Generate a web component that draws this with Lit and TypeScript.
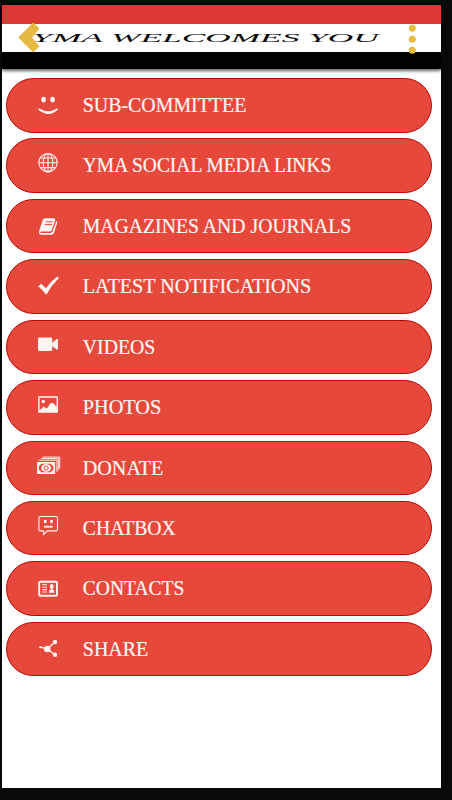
import { LitElement, html, css, svg } from "lit";
import { customElement } from "lit/decorators.js";

const items = [
  { label: "SUB-COMMITTEE", width: 163.5, icon: svg`<ellipse cx="43.6" cy="21.6" rx="2.3" ry="2.9"/><ellipse cx="52.6" cy="21.6" rx="2.3" ry="2.9"/><path d="M38.2 31.6Q37.8 30.2 39.4 30.6Q48 36 56.8 30.6Q58.4 30.2 57.8 31.8Q48.5 40.4 38.2 31.6Z"/>` },
  { label: "YMA SOCIAL MEDIA LINKS", width: 248.5, icon: svg`<g class="line"><circle cx="48" cy="24.7" r="9.2"/><ellipse cx="48" cy="24.7" rx="4.9" ry="9.2"/><path d="M48 15.5V34M38.8 24.7H57.2M40.4 20H55.6M40.4 29.6H55.6"/></g>` },
  { label: "MAGAZINES AND JOURNALS", width: 268.5, icon: svg`<path d="M45.3 19.3H54Q55.6 19.5 55.2 21L51.8 31.2Q51.3 32.6 49.8 32.6H41.5Q39.6 32.8 40.4 34H50.5Q52 33.9 52.6 32.6L56.2 22.3Q57.7 22.5 57.1 24.2L53.9 34Q53.2 35.8 51.3 35.8H41.2Q38.2 35.5 39.2 31.7L42.6 21.2Q43.2 19.4 45.3 19.3Z"/><path class="cut" d="M45.7 22.8H52.7M44.8 25.6H51.8"/>` },
  { label: "LATEST NOTIFICATIONS", width: 228.5, icon: svg`<path d="M38.2 27.3L41.2 24.8L46 29.2Q50.2 23 57.2 17.6L58.9 19Q51.6 26 46.7 35.2H45.8Q42.4 30.8 38.2 27.3Z"/>` },
  { label: "VIDEOS", width: 72.5, icon: svg`<rect x="38" y="17.4" width="14.2" height="13.6" rx="1.3"/><path d="M52 23L56.7 19H58V29.6H56.7L52 26Z"/>` },
  { label: "PHOTOS", width: 78.5, icon: svg`<path fill-rule="evenodd" d="M39 16.2H57.2Q58 16.2 58 17V32Q58 32.8 57.2 32.8H39Q38.2 32.8 38.2 32V17Q38.2 16.2 39 16.2ZM39.6 17.8V30.3L43.7 26.5L46.5 28.5L48.6 26.5Q49.6 22.3 53 23.1L56.6 26.7V17.8Z"/><circle cx="43.3" cy="21.5" r="1.7"/>` },
  { label: "DONATE", width: 80.5, icon: svg`<rect x="37.1" y="21" width="18" height="12"/><path class="hole" d="M41 22.8H51.2Q51.2 24.4 53.3 25V29Q51.2 29.6 51.2 31.2H41Q41 29.6 38.9 29V25Q41 24.4 41 22.8Z"/><ellipse cx="46.1" cy="27" rx="4.9" ry="3.9"/><circle class="cut" cx="46.1" cy="27" r="2.1"/><path class="note" d="M39 19.2H56.9V30.8M41 17.6H58.3V29.3M42.5 16.1H59.7V27.5"/>` },
  { label: "CHATBOX", width: 93, icon: svg`<path class="line" d="M40.1 15.5H56.3Q57.5 15.5 57.5 16.7V28.7Q57.5 29.9 56.3 29.9H47.3L43.6 33.5V29.9H40.1Q38.9 29.9 38.9 28.7V16.7Q38.9 15.5 40.1 15.5Z"/><rect x="43.9" y="18.9" width="2.6" height="3.2"/><rect x="50.2" y="18.9" width="2.6" height="3.2"/><rect x="44" y="24.8" width="8.7" height="1.8"/>` },
  { label: "CONTACTS", width: 101.5, icon: svg`<rect class="frame" x="39.2" y="20.7" width="17.8" height="14" rx="1"/><path class="line" d="M42.2 23.8H47M42.2 26.2H47M42.2 28.6H47M42.2 31H47"/><ellipse cx="51.7" cy="25.5" rx="1.9" ry="2.4"/><path d="M50.8 27H52.6V28.8L54.3 29.6V31.7H49.1V29.6L50.8 28.8Z"/>` },
  { label: "SHARE", width: 65.5, icon: svg`<circle cx="47.3" cy="27" r="3.3"/><circle cx="55" cy="20" r="2.2"/><circle cx="55" cy="32.8" r="2.2"/><circle cx="40.3" cy="25.2" r="1.1"/><path class="rod" d="M40.3 25.2L47.3 27L55 20M47.3 27L55 32.8"/>` },
];

@customElement("app-root")
export class AppRoot extends LitElement {
  static styles = css`
    :host { display: block; }
    .device { box-sizing: border-box; height: 800px; width: 452px; padding: 5px 11px 12.5px 1.5px; background: #070808; }
    .screen { height: 100%; background: #fff; display: flex; flex-direction: column; }
    header { height: 64px; flex: none; background: linear-gradient(#db3834 0 19.3px, #fff 19.3px 47px, #000 47px); box-shadow: 0 2px 3px #0009; }
    header svg { display: block; width: 439.5px; height: 64px; }
    .gold { fill: #e7ba42; }
    .title { font: italic 11.5px "Liberation Serif", serif; fill: #080808; }
    nav { display: flex; flex-direction: column; gap: 5.93px; padding: 9px 9px 0 4.5px; }
    .row { box-sizing: border-box; height: 54.5px; border: 1px solid #ba0803; border-radius: 28px; background: #e6493c; display: flex; overflow: hidden; }
    .row svg { display: block; width: 424px; height: 53px; flex: none; fill: #fff5f2; }
    .label { font: 20.8px "Liberation Serif", serif; stroke: #fff5f2; stroke-width: 0.2; }
    .line, .note, .frame, .rod { fill: none; stroke: #fff5f2; }
    .line { stroke-width: 1.1; }
    .note { stroke-width: 0.95; }
    .frame { stroke-width: 1.9; }
    .rod { stroke-width: 1.3; }
    .cut { fill: none; stroke: #e6493c; stroke-width: 1; }
    .hole { fill: #e6493c; }
  `;

  render() {
    return html`
      <div class="device">
        <main class="screen">
          <header>
            <svg viewBox="1.5 5 439.5 64">
              <path class="gold" d="M17.7 37.5L32.7 22.5L39 28.5L31.6 37.5L39 46.5L32.7 52.5Z" />
              <text class="title" x="31.8" y="41.9" textLength="346.5" lengthAdjust="spacingAndGlyphs">YMA WELCOMES YOU</text>
              <circle class="gold" cx="411.8" cy="28.2" r="3.5" />
              <circle class="gold" cx="411.8" cy="39.2" r="3.5" />
              <circle class="gold" cx="411.8" cy="50.3" r="3.5" />
            </svg>
          </header>
          <nav>
            ${items.map((i) => html`
              <div class="row">
                <svg viewBox="7 1 424 53">
                  ${i.icon}
                  <text class="label" x="82.8" y="34.3" textLength=${i.width} lengthAdjust="spacingAndGlyphs">${i.label}</text>
                </svg>
              </div>`)}
          </nav>
        </main>
      </div>`;
  }
}
